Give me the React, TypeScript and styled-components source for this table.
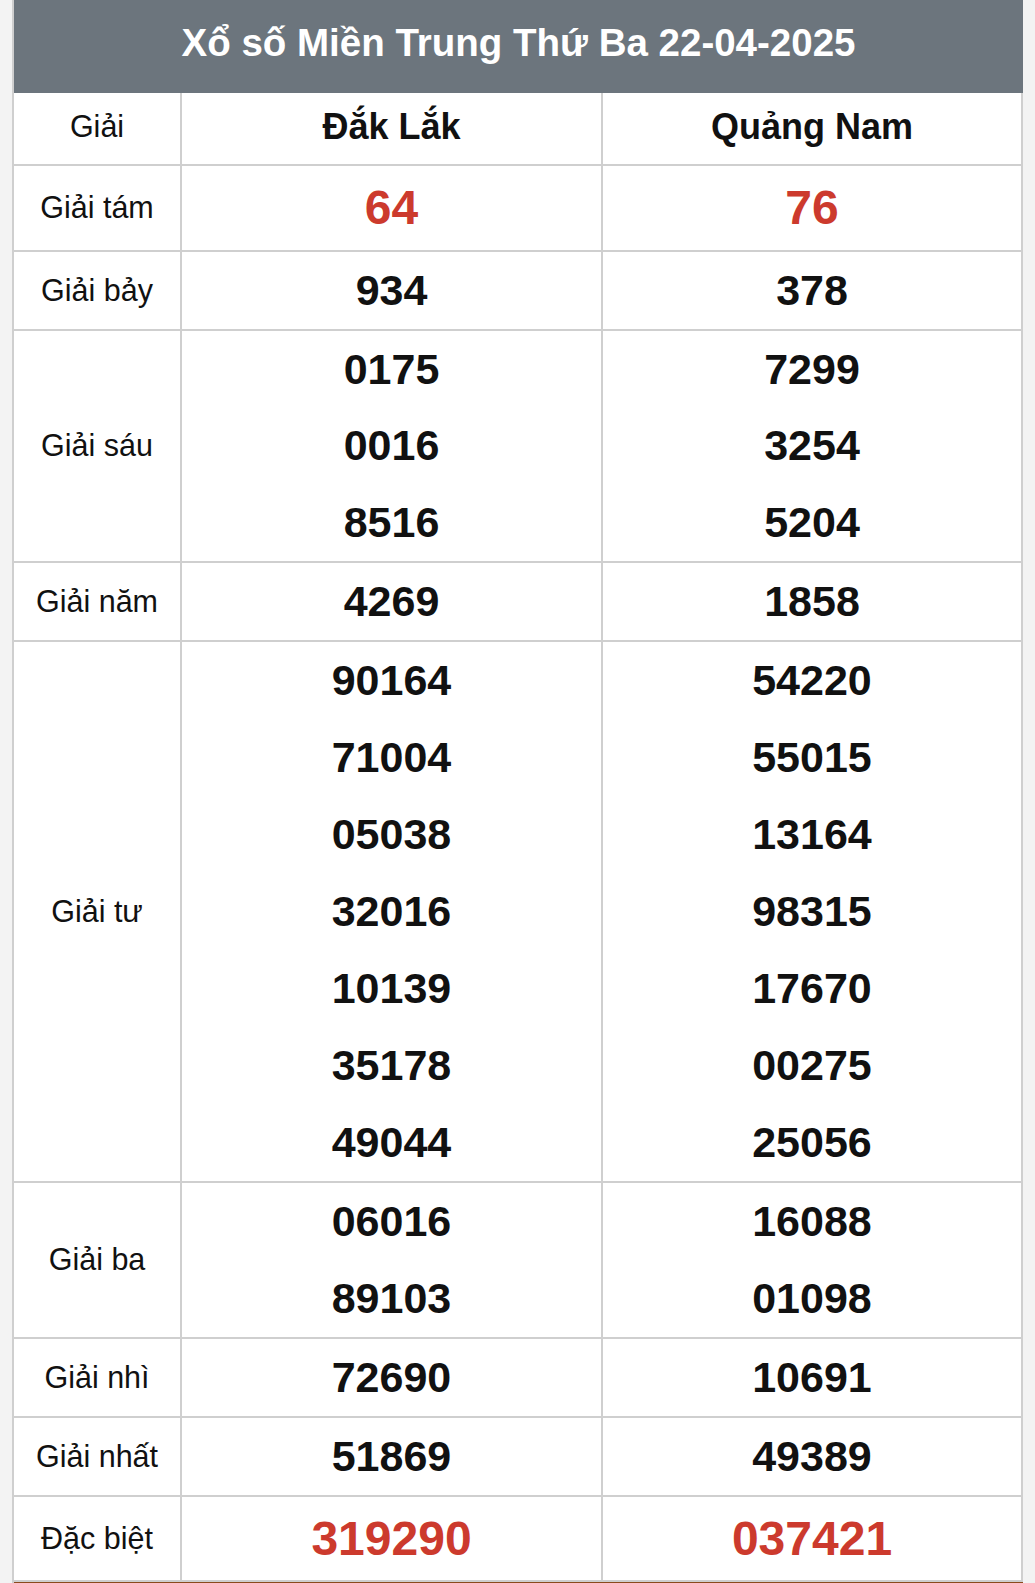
import styled, { createGlobalStyle } from "styled-components";

interface PrizeRow {
  label: string;
  left: string[];
  right: string[];
  highlight?: boolean;
}

const rows: PrizeRow[] = [
  { label: "Giải tám", left: ["64"], right: ["76"], highlight: true },
  { label: "Giải bảy", left: ["934"], right: ["378"] },
  { label: "Giải sáu", left: ["0175", "0016", "8516"], right: ["7299", "3254", "5204"] },
  { label: "Giải năm", left: ["4269"], right: ["1858"] },
  {
    label: "Giải tư",
    left: ["90164", "71004", "05038", "32016", "10139", "35178", "49044"],
    right: ["54220", "55015", "13164", "98315", "17670", "00275", "25056"],
  },
  { label: "Giải ba", left: ["06016", "89103"], right: ["16088", "01098"] },
  { label: "Giải nhì", left: ["72690"], right: ["10691"] },
  { label: "Giải nhất", left: ["51869"], right: ["49389"] },
  { label: "Đặc biệt", left: ["319290"], right: ["037421"], highlight: true },
];

const GlobalStyle = createGlobalStyle`
  body {
    margin: 0;
    background: #f3f3f3;
    font-family: "Liberation Sans", Arial, sans-serif;
  }
`;

const Frame = styled.div`
  margin-left: 12px;
  width: 1009px;
  border-left: 2px solid #cfcfcf;
  background: #fff;
`;

const Title = styled.div`
  height: 93px;
  display: flex;
  align-items: center;
  justify-content: center;
  padding-bottom: 8px;
  box-sizing: border-box;
  background: #6c757d;
  color: #fff;
  font-size: 38.5px;
  font-weight: 700;
`;

const Row = styled.div<{ $height?: number }>`
  display: grid;
  grid-template-columns: 168px 421px 1fr;
  border-bottom: 2px solid #cfcfcf;
  min-height: ${(p) => (p.$height ? `${p.$height}px` : "auto")};
`;

const Cell = styled.div`
  display: flex;
  flex-direction: column;
  align-items: center;
  justify-content: center;
  border-right: 2px solid #cfcfcf;
`;

const Label = styled.span<{ $head?: boolean }>`
  font-size: 30.5px;
  color: #111;
  padding-bottom: ${(p) => (p.$head ? "4px" : "0")};
`;

const Province = styled.span`
  font-size: 36px;
  font-weight: 700;
  color: #111;
  padding-bottom: 4px;
`;

const Number = styled.div<{ $red?: boolean }>`
  height: ${(p) => (p.$red ? "83.6px" : "76.95px")};
  display: flex;
  align-items: center;
  font-size: ${(p) => (p.$red ? "48px" : "43px")};
  font-weight: 700;
  color: ${(p) => (p.$red ? "#cc3a2d" : "#111")};
`;

const BottomStrip = styled.div`
  height: 5px;
  background: #8a4a1c;
`;

export default function App() {
  return (
    <>
      <GlobalStyle />
      <Frame>
        <Title>Xổ số Miền Trung Thứ Ba 22-04-2025</Title>
        <Row $height={71}>
          <Cell>
            <Label $head>Giải</Label>
          </Cell>
          <Cell>
            <Province>Đắk Lắk</Province>
          </Cell>
          <Cell>
            <Province>Quảng Nam</Province>
          </Cell>
        </Row>
        {rows.map((row) => (
          <Row key={row.label}>
            <Cell>
              <Label>{row.label}</Label>
            </Cell>
            <Cell>
              {row.left.map((n) => (
                <Number key={n} $red={row.highlight}>
                  {n}
                </Number>
              ))}
            </Cell>
            <Cell>
              {row.right.map((n) => (
                <Number key={n} $red={row.highlight}>
                  {n}
                </Number>
              ))}
            </Cell>
          </Row>
        ))}
        <BottomStrip />
      </Frame>
    </>
  );
}
